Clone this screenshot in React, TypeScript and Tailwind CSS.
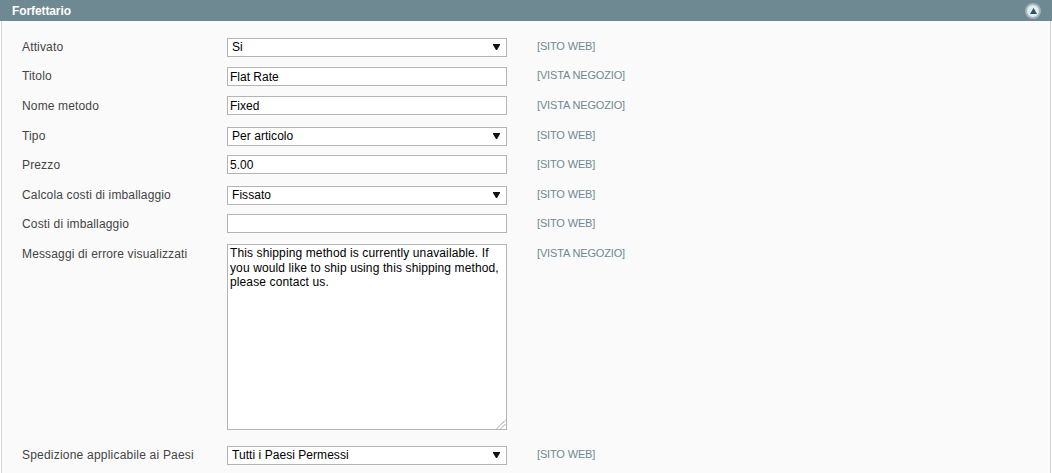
const FONT = "font-['Liberation_Sans',Arial,sans-serif]";

type Row = {
  label: string;
  kind: 'select' | 'input' | 'textarea';
  value: string;
  scope: string;
  rowClass: string;
  textTop: string;
  wide?: boolean;
};

const rows: Row[] = [
  { label: 'Attivato', kind: 'select', value: 'Si', scope: '[SITO WEB]', rowClass: 'h-[29px]', textTop: 'pt-[1px]' },
  { label: 'Titolo', kind: 'input', value: 'Flat Rate', scope: '[VISTA NEGOZIO]', rowClass: 'h-[29px]', textTop: 'pt-[1px]' },
  { label: 'Nome metodo', kind: 'input', value: 'Fixed', scope: '[VISTA NEGOZIO]', rowClass: 'h-[31px]', textTop: 'pt-[2px]' },
  { label: 'Tipo', kind: 'select', value: 'Per articolo', scope: '[SITO WEB]', rowClass: 'h-[28px]', textTop: 'pt-[1px]' },
  { label: 'Prezzo', kind: 'input', value: '5.00', scope: '[SITO WEB]', rowClass: 'h-[31px]', textTop: 'pt-[2px]' },
  { label: 'Calcola costi di imballaggio', kind: 'select', value: 'Fissato', scope: '[SITO WEB]', rowClass: 'h-[28px]', textTop: 'pt-[1px]' },
  { label: 'Costi di imballaggio', kind: 'input', value: '', scope: '[SITO WEB]', rowClass: 'h-[30px]', textTop: 'pt-[2px]' },
  {
    label: 'Messaggi di errore visualizzati',
    kind: 'textarea',
    value: 'This shipping method is currently unavailable. If you would like to ship using this shipping method, please contact us.',
    scope: '[VISTA NEGOZIO]',
    rowClass: 'h-[202px]',
    textTop: 'pt-[2px]',
  },
  { label: 'Spedizione applicabile ai Paesi', kind: 'select', value: 'Tutti i Paesi Permessi', scope: '[SITO WEB]', rowClass: 'h-[27px]', textTop: 'pt-[1px]', wide: true },
];

function Field({ row }: { row: Row }) {
  if (row.kind === 'select') {
    return (
      <div className="flex h-[19px] w-[280px] items-center justify-between border border-[#b4b4b4] bg-white pl-[4px] pr-[6px] text-[12px] tracking-[0.05px] text-black">
        <span className="mb-[2px]">{row.value}</span>
        <svg className="mb-[1px]" width="7" height="6" viewBox="0 0 7 6">
          <path d="M0 0h7v1L4 6H3L0 1z" fill="#111" />
        </svg>
      </div>
    );
  }
  if (row.kind === 'textarea') {
    return (
      <div className="relative h-[186px] w-[280px] border border-[#b4b4b4] bg-white px-[2px] py-[1px] text-[12px] leading-[14.5px] tracking-[0.12px] text-black">
        {row.value}
        <svg className="absolute bottom-0 right-0" width="10" height="10" viewBox="0 0 10 10">
          <path d="M1 9.5 9.5 1M5 9.5 9.5 5" stroke="#666" strokeWidth="1" strokeDasharray="1 0.6" fill="none" />
        </svg>
      </div>
    );
  }
  return (
    <div className="flex h-[19px] w-[280px] items-center border border-[#b4b4b4] bg-white px-[2px] text-[12px] text-black">
      {row.value}
    </div>
  );
}

export default function App() {
  return (
    <div className={`h-[473px] w-[1052px] overflow-hidden bg-white ${FONT}`}>
      <div className="flex h-[21px] items-center justify-between bg-[#6f8992] pl-[12px] pr-[11px]">
        <span className="text-[12px] font-bold tracking-[-0.1px] text-white">Forfettario</span>
        <div className="mt-[1px] flex h-[16px] w-[16px] items-center justify-center rounded-full border-2 border-[#a3b5ba] bg-[#e3ebed]">
          <svg width="7" height="6" viewBox="0 0 7 6">
            <path d="M3.5 0 7 6H0z" fill="#2a5568" />
          </svg>
        </div>
      </div>
      <div className="mx-[1px] h-[452px] border-x border-[#d6d6d6] bg-[#fafafa] pl-[20px] pt-[17px]">
        {rows.map((row) => (
          <div key={row.label} className={`flex items-start ${row.rowClass}`}>
            <div className={`w-[205px] text-[12px] leading-[16px] text-[#444] ${row.wide ? 'tracking-[0.21px]' : 'tracking-[0.15px]'} ${row.textTop}`}>{row.label}</div>
            <Field row={row} />
            <div className={`ml-[30px] text-[11px] leading-[15px] tracking-[-0.15px] text-[#6f8992] ${row.textTop}`}>{row.scope}</div>
          </div>
        ))}
      </div>
    </div>
  );
}
